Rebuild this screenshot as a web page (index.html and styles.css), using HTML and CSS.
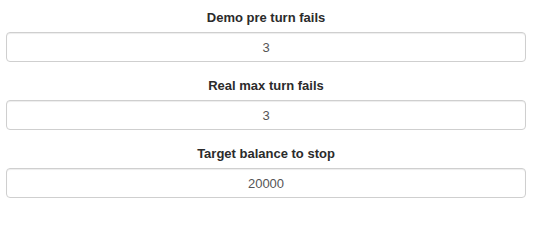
FILE: index.html
```html
<!DOCTYPE html>
<html>
<head>
<meta charset="utf-8">
<link rel="stylesheet" href="styles.css">
</head>
<body>
<form class="settings">
  <div class="group">
    <label class="label">Demo pre turn fails</label>
    <input class="field" type="text" value="3">
  </div>
  <div class="group">
    <label class="label">Real max turn fails</label>
    <input class="field" type="text" value="3">
  </div>
  <div class="group">
    <label class="label">Target balance to stop</label>
    <input class="field" type="text" value="20000">
  </div>
</form>
</body>
</html>
```
FILE: styles.css
```css
html, body {
  margin: 0;
  padding: 0;
  background: #fff;
}
body {
  font-family: "Liberation Sans", Arial, sans-serif;
  color: #333;
}
.settings {
  display: flex;
  flex-direction: column;
  gap: 15px;
  padding: 9px 7px 0 6px;
}
.group {
  display: flex;
  flex-direction: column;
  gap: 5px;
}
.label {
  display: block;
  text-align: center;
  font-weight: bold;
  font-size: 13px;
  line-height: 18px;
  color: #2b2b2b;
}
.field {
  box-sizing: border-box;
  width: 100%;
  height: 30px;
  margin: 0;
  padding: 5px 10px;
  border: 1px solid #cfcfcf;
  border-radius: 4px;
  box-shadow: inset 0 1px 1px rgba(0,0,0,0.075);
  font-family: "Liberation Sans", Arial, sans-serif;
  font-size: 13px;
  color: #555;
  text-align: center;
  background: #fff;
  outline: none;
}
```
